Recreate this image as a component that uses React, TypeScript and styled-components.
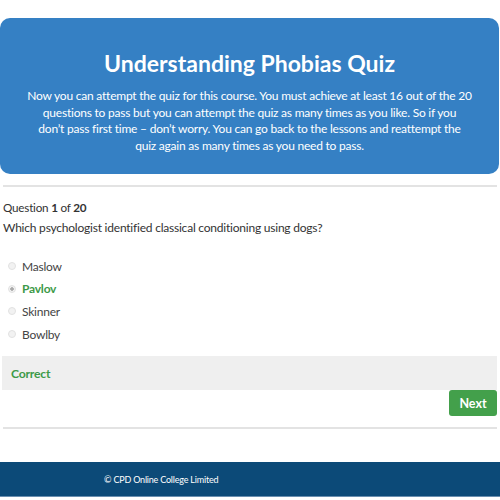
import React from 'react';
import styled, { createGlobalStyle } from 'styled-components';

const GlobalStyle = createGlobalStyle`
  body {
    margin: 0;
    background: #fff;
    font-family: Lato, 'Open Sans', sans-serif;
    letter-spacing: -0.22px;
    color: #333;
  }
`;

const Page = styled.div`
  width: 500px;
  padding-top: 18px;
`;

const Banner = styled.section`
  margin-right: 1px;
  height: 156px;
  box-sizing: border-box;
  padding: 31px 20px 0;
  background: #3580c4;
  border-radius: 10px;
  color: #fff;
  text-align: center;
`;

const Title = styled.h1`
  margin: 0 0 11px;
  font-size: 23px;
  font-weight: 700;
  line-height: 28px;
  letter-spacing: 0;
`;

const Intro = styled.p`
  margin: 0;
  font-size: 12px;
  line-height: 16.7px;
`;

const Divider = styled.hr<{ $gap: number }>`
  margin: ${(p) => p.$gap}px 3px 0;
  border: 0;
  border-top: 2px solid #e3e3e3;
`;

const Quiz = styled.div`
  padding: 11px 3px 0;
`;

const Counter = styled.div`
  font-size: 11.7px;
  line-height: 18px;
  color: #333;

  b {
    font-weight: 700;
  }
`;

const Question = styled.div`
  margin-top: 3px;
  font-size: 12px;
  line-height: 18px;
  color: #333;
`;

const Options = styled.ul`
  list-style: none;
  margin: 20px 0 0;
  padding: 0;
  display: flex;
  flex-direction: column;
  gap: 4.7px;
`;

const Option = styled.li<{ $correct?: boolean }>`
  display: flex;
  align-items: center;
  gap: 6px;
  height: 18px;
  padding-left: 5px;
  font-size: 12px;
  color: ${(p) => (p.$correct ? '#3d9a48' : '#444')};
  font-weight: ${(p) => (p.$correct ? 700 : 400)};
`;

const Radio = styled.span<{ $checked?: boolean }>`
  width: 6px;
  height: 6px;
  border-radius: 50%;
  border: 1px solid #e2e2e2;
  background: ${(p) => (p.$checked ? 'radial-gradient(circle, #aaa 0 1.5px, #f2f2f2 2px)' : '#f2f2f2')};
`;

const Feedback = styled.div`
  margin: 13px 0 0 -1px;
  height: 34px;
  display: flex;
  align-items: center;
  padding-left: 9px;
  background: #efefef;
  color: #3d9a48;
  font-size: 12.2px;
  font-weight: 700;
`;

const Actions = styled.div`
  display: flex;
  justify-content: flex-end;
`;

const NextButton = styled.button`
  width: 48px;
  height: 26px;
  border: 0;
  border-radius: 3px;
  background: #43a04b;
  color: #fff;
  font-family: inherit;
  font-size: 12.5px;
  font-weight: 700;
  cursor: pointer;
`;

const Footer = styled.footer`
  margin-top: 33px;
  height: 34px;
  display: flex;
  align-items: center;
  padding-left: 104px;
  background: #0c4a78;
  border-bottom: 1px solid #6a8fb0;
  color: #fff;
  font-size: 9px;
  letter-spacing: -0.2px;
`;

const options = ['Maslow', 'Pavlov', 'Skinner', 'Bowlby'];

export default function App() {
  return (
    <Page>
      <GlobalStyle />
      <Banner>
        <Title>Understanding Phobias Quiz</Title>
        <Intro>
          Now you can attempt the quiz for this course. You must achieve at least 16 out of the 20
          <br />
          questions to pass but you can attempt the quiz as many times as you like. So if you
          <br />
          don’t pass first time – don’t worry. You can go back to the lessons and reattempt the
          <br />
          quiz again as many times as you need to pass.
        </Intro>
      </Banner>
      <Divider $gap={11} />
      <Quiz>
        <Counter>
          Question <b>1</b> of <b>20</b>
        </Counter>
        <Question>Which psychologist identified classical conditioning using dogs?</Question>
        <Options>
          {options.map((o) => (
            <Option key={o} $correct={o === 'Pavlov'}>
              <Radio $checked={o === 'Pavlov'} />
              {o}
            </Option>
          ))}
        </Options>
        <Feedback>Correct</Feedback>
        <Actions>
          <NextButton>Next</NextButton>
        </Actions>
      </Quiz>
      <Divider $gap={11} />
      <Footer>© CPD Online College Limited</Footer>
    </Page>
  );
}
